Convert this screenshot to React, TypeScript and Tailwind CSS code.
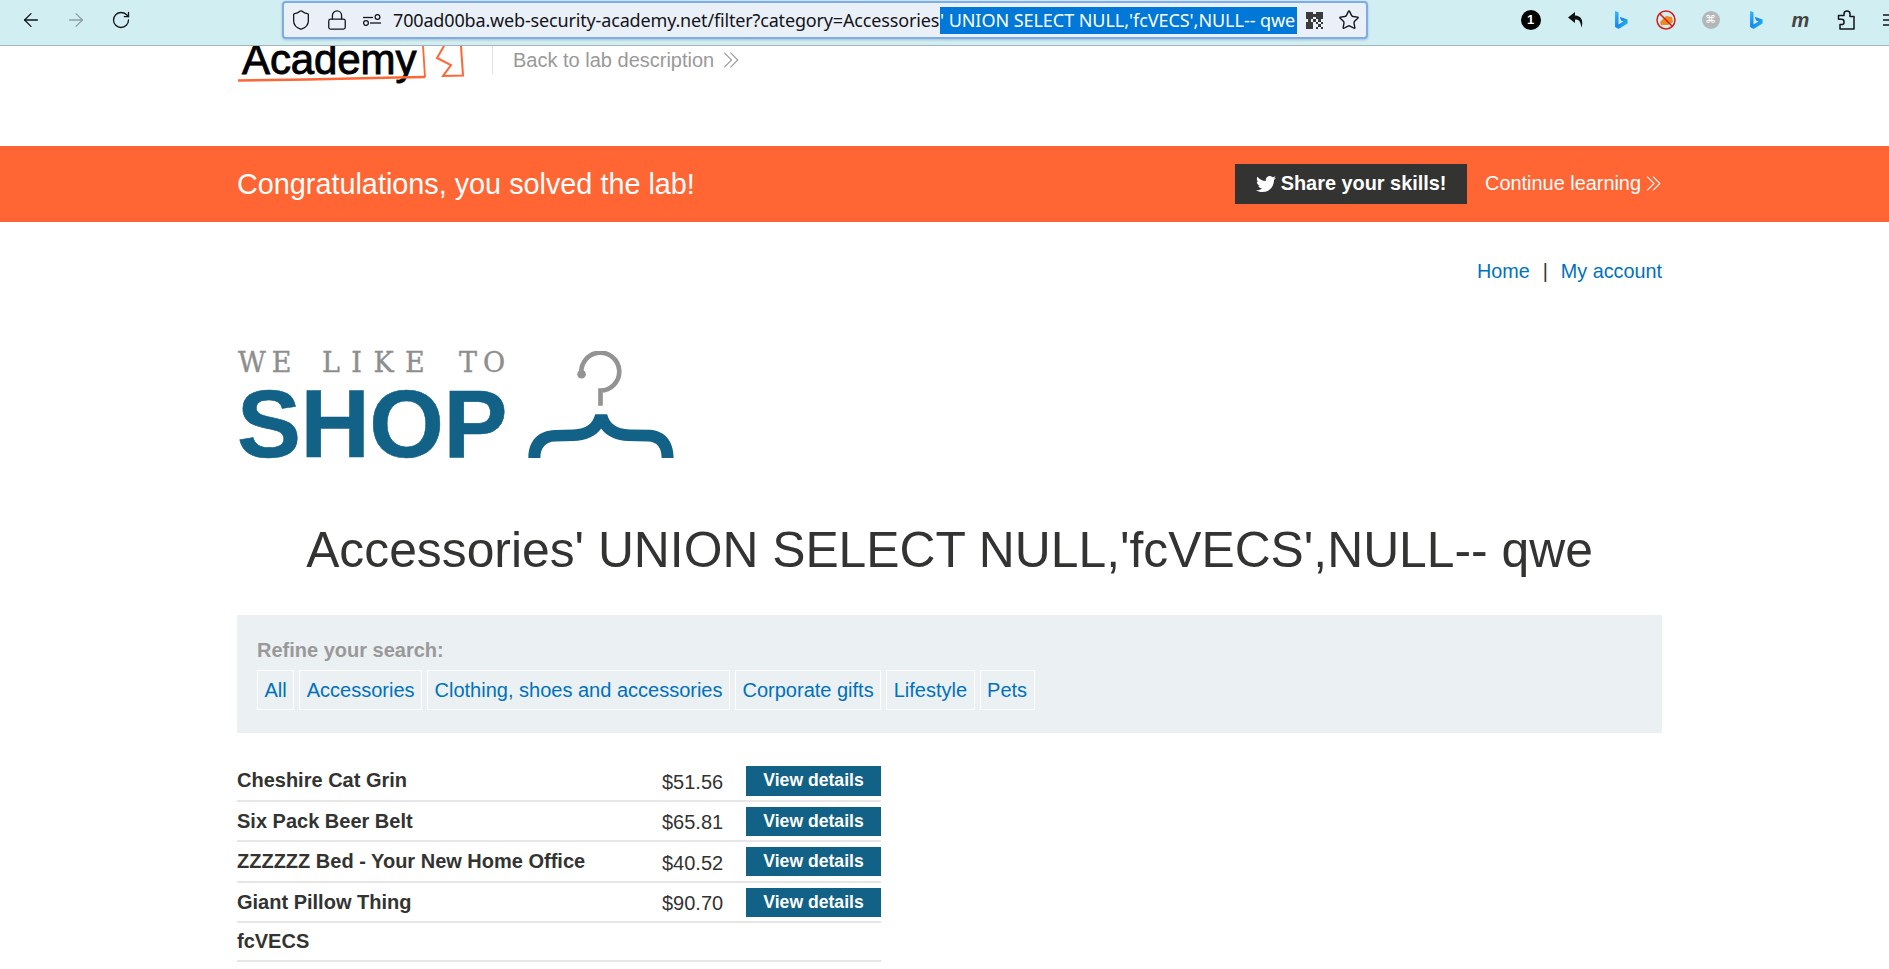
import { ArrowLeft, ArrowRight, RotateCw, Shield, Lock, Star } from "lucide-react";
import { FaTwitter } from "react-icons/fa";

function Chevrons({ className }: { className: string }) {
  return (
    <svg viewBox="0 0 16 16" className={className} fill="none" stroke="currentColor" strokeWidth="1">
      <polyline points="2,1.5 8.5,8 2,14.5" />
      <polyline points="7.5,1.5 14,8 7.5,14.5" />
    </svg>
  );
}

function Bing({ id }: { id: string }) {
  return (
    <svg viewBox="0 0 14 20" className="w-[14px] h-[20px]">
      <defs>
        <linearGradient id={id} x1="0" y1="0" x2="1" y2="1">
          <stop offset="0" stopColor="#37bdff" />
          <stop offset="0.5" stopColor="#1a86f0" />
          <stop offset="1" stopColor="#26c6e8" />
        </linearGradient>
      </defs>
      <path d="M1 1l3.500 1.200v12.300l5-2.900-2.400-1.100-1.500-3.700 8 2.800v4L4.600 19 1 17z" fill={`url(#${id})`} />
    </svg>
  );
}

function Toolbar() {
  return (
    <div className="h-[46px] shrink-0 bg-[#d1eff3] border-b border-[#a3b5b8] flex items-center pl-[8px] pb-[5px] overflow-hidden relative z-10">
      <div className="w-[45px] shrink-0 flex justify-center text-[#15141a]"><ArrowLeft size={22} strokeWidth={1.4} /></div>
      <div className="w-[45px] shrink-0 flex justify-center text-[#8f9ea1]"><ArrowRight size={22} strokeWidth={1.4} /></div>
      <div className="w-[45px] shrink-0 flex justify-center text-[#15141a]"><RotateCw size={20} strokeWidth={1.6} /></div>
      <div className="ml-[139px] w-[1086px] h-[38px] shrink-0 rounded-[4px] bg-[#e9f0f8] border-2 border-[#7dabec] shadow-[0_1px_3px_rgba(0,0,0,0.2)] flex items-center pl-[6px] text-[#15141a]">
        <Shield size={22} strokeWidth={1.4} className="shrink-0" />
        <Lock size={22} strokeWidth={1.4} className="ml-[14px] shrink-0" />
        <svg viewBox="0 0 18 12" className="w-[18px] h-[12px] ml-[15px] shrink-0" fill="none" stroke="currentColor" strokeWidth="1.300">
          <path d="M0 3.500h10" />
          <circle cx="14.500" cy="3" r="2.400" />
          <circle cx="3" cy="9" r="2.400" />
          <path d="M7 9h11" />
        </svg>
        <div className="ml-[12px] text-[18px] leading-[27px] whitespace-nowrap font-['Noto_Sans',sans-serif] tracking-[-0.16px] flex">
          <span className="w-[547px] shrink-0">700ad00ba.web-security-academy.net/filter?category=Accessories</span>
          <span className="w-[357px] shrink-0 bg-[#0078d7] text-white tracking-[-0.05px]">' UNION SELECT NULL,'fcVECS',NULL-- qwe</span>
        </div>
        <svg viewBox="0 0 7 7" className="w-[17px] h-[17px] ml-[9px] shrink-0" fill="#3b3b3b" shapeRendering="crispEdges">
          <path d="M0 0h3v3H0zM4 0h3v3H4zM0 4h3v3H0zM4 4h1v1H4zM6 4h1v1H6zM5 5h1v1H5zM4 6h1v1H4zM6 6h1v1H6zM3 1h1v1H3zM3 3h1v1H3zM1 3h1v1H1zM5 3h1v1H5z" />
        </svg>
        <Star size={22} strokeWidth={1.5} className="ml-[15px] shrink-0" />
      </div>
      <div className="ml-[140px] flex items-center shrink-0">
        <div className="w-[45px] flex justify-center">
          <div className="w-[20px] h-[20px] rounded-full bg-black text-white text-[13px] font-bold flex items-center justify-center font-['Liberation_Sans',sans-serif]">1</div>
        </div>
        <div className="w-[45px] flex justify-center">
          <svg viewBox="0 0 18 18" className="w-[18px] h-[18px]"><path d="M8 1L1 6.500 8 12V8.500c3.600 0 5.800 1.600 6.400 8.200C17 10 14 4.600 8 4.600z" fill="#111" /></svg>
        </div>
        <div className="w-[45px] flex justify-center"><Bing id="bing-a" /></div>
        <div className="w-[45px] flex justify-center">
          <svg viewBox="0 0 20 20" className="w-[20px] h-[20px]">
            <path d="M4 12l6-6 6 1 1 5-5 3H5z" fill="#ec8a1c" />
            <circle cx="10" cy="10" r="9" fill="none" stroke="#d51a1a" strokeWidth="1.500" />
            <path d="M3.800 3.800l12.400 12.400" stroke="#d51a1a" strokeWidth="1.500" />
          </svg>
        </div>
        <div className="w-[45px] flex justify-center">
          <div className="w-[18px] h-[18px] rounded-full bg-[#b3b7b8] text-white text-[11px] flex items-center justify-center font-['DejaVu_Sans',sans-serif]">⌘</div>
        </div>
        <div className="w-[45px] flex justify-center"><Bing id="bing-b" /></div>
        <div className="w-[45px] flex justify-center text-[#444] text-[20px] font-bold italic leading-none font-['Liberation_Sans',sans-serif]">m</div>
        <div className="w-[45px] flex justify-center">
          <svg viewBox="0 0 18 20" className="w-[18px] h-[20px]" fill="none" stroke="#15141a" strokeWidth="1.500" strokeLinejoin="round">
            <path d="M1.500 5.500h5.500V4a3 3 0 0 1 6 0v2.500h4V19H3v-4.500h1.500a2.600 2.600 0 0 0 0-5.200H1.500z" />
          </svg>
        </div>
        <div className="w-[45px] flex justify-center">
          <svg viewBox="0 0 16 12" className="w-[16px] h-[12px]" stroke="#15141a" strokeWidth="1.500"><path d="M0 1h16M0 6h16M0 11h16" /></svg>
        </div>
      </div>
    </div>
  );
}

function Header() {
  return (
    <div className="h-[100px] shrink-0 overflow-hidden pl-[237px] flex items-start">
      <div className="relative w-[203px] h-[40px]">
        <span className="absolute left-[5px] top-[-11px] text-[42px] leading-[50px] text-black font-['Liberation_Sans',sans-serif] [-webkit-text-stroke:0.9px_black] tracking-[-0.1px]">Academy</span>
        <svg viewBox="0 0 240 36" className="absolute left-0 top-0 w-[240px] h-[36px] overflow-visible" fill="none" stroke="#ff6633">
          <path d="M1 34.500L70 33.500 160 31.500 188 31" strokeWidth="2.500" />
          <path d="M188 31L186 0" strokeWidth="1.800" />
          <path d="M207 0L200 12 214 19 206 30 226 29.500 224 0" strokeWidth="2" />
        </svg>
      </div>
      <div className="ml-[52px] w-px h-[28px] bg-[#e4e4e4]" />
      <div className="ml-[20px] flex items-center h-[28px] text-[#999999] font-['Liberation_Sans',sans-serif] text-[20px]">
        <span>Back to lab description</span>
        <Chevrons className="ml-[8px] w-[18px] h-[18px]" />
      </div>
    </div>
  );
}

function Banner() {
  return (
    <div className="h-[76px] shrink-0 bg-[#ff6633] pl-[237px] pr-[227px] flex items-center text-white">
      <div className="text-[28.8px] leading-none flex-1">Congratulations, you solved the lab!</div>
      <div className="w-[232px] h-[40px] bg-[#333332] flex items-center justify-center gap-[5px] text-[19.9px] font-bold">
        <FaTwitter className="w-[20px] h-[20px]" />
        <span>Share your skills!</span>
      </div>
      <div className="ml-[18px] flex items-center text-[19.9px]">
        <span>Continue learning</span>
        <Chevrons className="ml-[4px] w-[17px] h-[17px]" />
      </div>
    </div>
  );
}

function Logo() {
  return (
    <div className="mt-[67px] flex items-end">
      <div className="w-[291px]">
        <div className="ml-[1px] flex text-[27px] leading-[22px] h-[22px] text-[#8e8e8e] [-webkit-text-stroke:0.4px_#8e8e8e] whitespace-nowrap font-['DejaVu_Serif',serif]">
          <span className="w-[84px] tracking-[6px]">WE</span>
          <span className="w-[137px] tracking-[11.4px]">LIKE</span>
          <span className="tracking-[6px]">TO</span>
        </div>
        <div className="mt-[14px] text-[96px] leading-[72px] h-[72px] font-bold tracking-[-0.5px] [-webkit-text-stroke:0.6px_#126186] text-[#126186] whitespace-nowrap">SHOP</div>
      </div>
      <svg viewBox="925 65 437 322" className="w-[146px] h-[107px] mb-[2px]">
        <path d="M1085 135 a57 57 0 1 1 57 49 v46" fill="none" stroke="#939393" strokeWidth="14" />
        <circle cx="1085" cy="135" r="13" fill="#939393" />
        <path d="M925 387C925 335 955 305 1005 303L1060 301C1100 298 1118 285 1126 255L1162 255C1170 285 1190 298 1230 301L1290 302C1335 305 1362 335 1362 387L1326 387C1326 355 1312 338 1285 337L1225 336C1190 334 1160 322 1144 298C1128 322 1098 334 1060 336L1005 337C978 338 961 355 961 387Z" fill="#126186" />
      </svg>
    </div>
  );
}

const tabs = ["All", "Accessories", "Clothing, shoes and accessories", "Corporate gifts", "Lifestyle", "Pets"];

function Filter() {
  return (
    <div className="mt-[37px] h-[118px] bg-[#ebf0f2] pl-[20px] pt-[22px]">
      <div className="text-[20px] leading-[26px] font-bold text-[#999999]">Refine your search:</div>
      <div className="mt-[7px] flex gap-[5px]">
        {tabs.map((t) => (
          <div key={t} className="h-[40px] px-[6.5px] border border-white flex items-center text-[20px] text-[#0071bc] whitespace-nowrap">{t}</div>
        ))}
      </div>
    </div>
  );
}

const rows = [
  { name: "Cheshire Cat Grin", price: "$51.56", row: "h-[41px]", btn: "h-[30px]" },
  { name: "Six Pack Beer Belt", price: "$65.81", row: "h-[40px]", btn: "h-[29px]" },
  { name: "ZZZZZZ Bed - Your New Home Office", price: "$40.52", row: "h-[41px]", btn: "h-[29px]" },
  { name: "Giant Pillow Thing", price: "$90.70", row: "h-[40px]", btn: "h-[29px]" },
  { name: "fcVECS", price: "", row: "h-[39px]", btn: "" },
];

function Table() {
  return (
    <div className="mt-[28px] w-[644px]">
      {rows.map((r) => (
        <div key={r.name} className={`${r.row} border-b-2 border-[#e6e6e6] flex items-center`}>
          <div className="w-[425px] text-[20px] font-bold whitespace-nowrap leading-none pb-[1px]">{r.name}</div>
          <div className="w-[84px] text-[20px] leading-none pt-[2px]">{r.price}</div>
          {r.price && (
            <div className={`${r.btn} w-[135px] bg-[#126186] text-white text-[17.6px] font-bold flex items-center justify-center`}>View details</div>
          )}
        </div>
      ))}
    </div>
  );
}

export default function App() {
  return (
    <div className="h-[969px] overflow-hidden flex flex-col bg-white text-[#333332] font-['Liberation_Sans',Arial,sans-serif]">
      <Toolbar />
      <Header />
      <Banner />
      <div className="ml-[237px] w-[1425px]">
        <div className="mt-[38px] h-[24px] flex justify-end items-center text-[19.8px] text-[#0071bc]">
          <span>Home</span>
          <span className="mx-[13px] text-[#333332]">|</span>
          <span>My account</span>
        </div>
        <Logo />
        <h1 className="mt-[62px] text-center text-[49.8px] leading-[56px] whitespace-nowrap">Accessories' UNION SELECT NULL,'fcVECS',NULL-- qwe</h1>
        <Filter />
        <Table />
      </div>
    </div>
  );
}
